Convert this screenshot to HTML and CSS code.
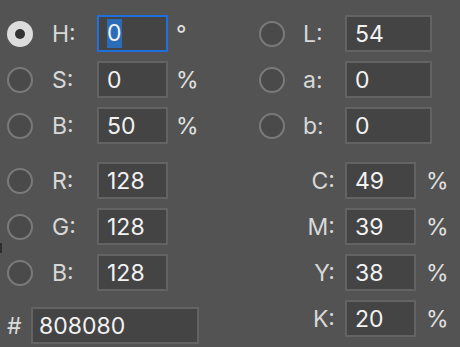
FILE: index.html
```html
<!DOCTYPE html>
<html lang="en">
<head>
  <meta charset="UTF-8" />
  <title>Color Picker</title>
  <link rel="stylesheet" href="styles.css">
</head>
<body>
  <div id="picker">
    <span class="edge-mark"></span>
    <div class="col col-left">
      <div class="group">
        <div class="row">
          <span class="radio checked"></span>
          <span class="label">H:</span>
          <span class="field focus"><span class="sel">0</span></span>
          <span class="unit">°</span>
        </div>
        <div class="row">
          <span class="radio"></span>
          <span class="label">S:</span>
          <span class="field">0</span>
          <span class="unit">%</span>
        </div>
        <div class="row">
          <span class="radio"></span>
          <span class="label">B:</span>
          <span class="field">50</span>
          <span class="unit">%</span>
        </div>
      </div>
      <div class="group">
        <div class="row">
          <span class="radio"></span>
          <span class="label">R:</span>
          <span class="field">128</span>
        </div>
        <div class="row">
          <span class="radio"></span>
          <span class="label">G:</span>
          <span class="field">128</span>
        </div>
        <div class="row">
          <span class="radio"></span>
          <span class="label">B:</span>
          <span class="field">128</span>
        </div>
      </div>
      <div class="row hex-row">
        <span class="hash">#</span>
        <span class="field hex">808080</span>
      </div>
    </div>

    <div class="col col-right">
      <div class="group">
        <div class="row">
          <span class="radio"></span>
          <span class="label">L:</span>
          <span class="field wide">54</span>
        </div>
        <div class="row">
          <span class="radio"></span>
          <span class="label">a:</span>
          <span class="field wide">0</span>
        </div>
        <div class="row">
          <span class="radio"></span>
          <span class="label">b:</span>
          <span class="field wide">0</span>
        </div>
      </div>
      <div class="group cmyk">
        <div class="row">
          <span class="label">C:</span>
          <span class="field">49</span>
          <span class="unit">%</span>
        </div>
        <div class="row">
          <span class="label">M:</span>
          <span class="field">39</span>
          <span class="unit">%</span>
        </div>
        <div class="row">
          <span class="label">Y:</span>
          <span class="field">38</span>
          <span class="unit">%</span>
        </div>
        <div class="row">
          <span class="label">K:</span>
          <span class="field">20</span>
          <span class="unit">%</span>
        </div>
      </div>
    </div>
  </div>
</body>
</html>
```

FILE: styles.css
```css
html {
  font-size: 16px;
}
body {
  margin: 0;
  background-color: #535353;
  color: #f2f2f2;
  font-family: Inter, "Liberation Sans", sans-serif;
  font-size: 23px;
  width: 460px;
  height: 347px;
  overflow: hidden;
}
#picker {
  position: relative;
  display: flex;
  padding: 15px 0 0 7px;
}
.edge-mark {
  position: absolute;
  left: 0;
  top: 243px;
  width: 2px;
  height: 10px;
  background-color: #2e2e2e;
}
.col {
  display: flex;
  flex-direction: column;
  gap: 18px;
}
.col-left {
  width: 252px;
}
.group {
  display: flex;
  flex-direction: column;
  gap: 9px;
}
.row {
  display: flex;
  align-items: center;
  height: 37px;
}
.radio {
  box-sizing: border-box;
  width: 26px;
  height: 26px;
  border: 2px solid #7a7a7a;
  border-radius: 50%;
  background-color: #4a4a4a;
  margin-right: 19px;
  display: flex;
  align-items: center;
  justify-content: center;
}
.radio.checked {
  border: none;
  background-color: #dcdcdc;
}
.radio.checked::after {
  content: "";
  width: 10px;
  height: 10px;
  border-radius: 50%;
  background-color: #333;
}
.label {
  width: 45px;
  color: #d8d8d8;
}
.field {
  box-sizing: border-box;
  width: 71px;
  height: 37px;
  padding: 0 0 0 8px;
  background-color: #444;
  border: 2px solid #636363;
  display: flex;
  align-items: center;
}
.field.focus {
  border-color: #1f6fdc;
}
.sel {
  background-color: #2b6cb8;
  padding: 1px 0;
  line-height: 27px;
}
.unit {
  margin-left: 8px;
  color: #e0e0e0;
}
.hex-row {
  margin-top: -2px;
}
.hash {
  width: 24px;
  color: #dadada;
}
.field.hex {
  width: 168px;
  padding-left: 6px;
}
.col-right .radio {
  margin-right: 18px;
}
.col-right .label {
  width: 42px;
}
.field.wide {
  width: 87px;
}
.cmyk .label {
  width: 76px;
  margin-right: 10px;
  text-align: right;
}
.cmyk .unit {
  margin-left: 10px;
}
```
